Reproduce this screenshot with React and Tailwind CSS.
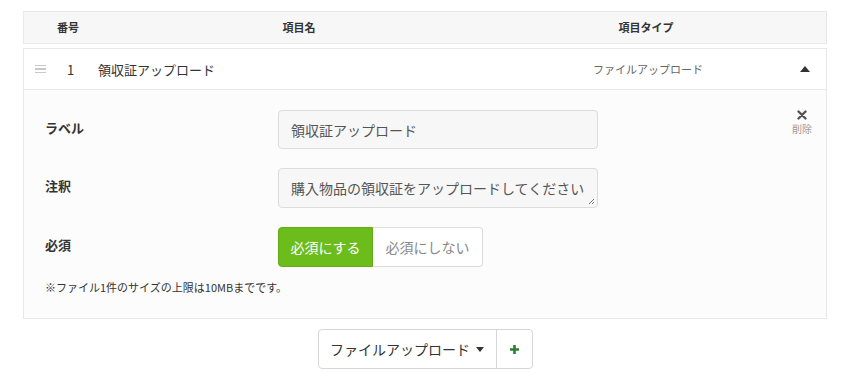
import React from 'react';

const font = { fontFamily: '"Noto Sans CJK JP", "Noto Sans", sans-serif' };

const App = () => {
  return (
    <div className="w-[850px] h-[388px] bg-white px-[23px] pt-[11px] text-[#333]" style={font}>
      {/* table header */}
      <div className="flex items-center h-[33px] border border-[#e8e8e8] bg-[#f7f7f7] text-[11px] font-bold leading-none text-[#333]">
        <div className="w-[88px] text-center">番号</div>
        <div className="w-[374px] text-center">項目名</div>
        <div className="flex-1 text-center pr-[100px] pl-[80px]">項目タイプ</div>
      </div>

      {/* item */}
      <div className="mt-[4px] border border-[#e8e8e8] bg-[#fcfcfc]">
        <div className="flex items-center h-[41px] bg-white border-b border-[#e8e8e8]">
          <div className="w-[12px] ml-[10px] flex flex-col gap-[2px] items-center">
            <span className="block w-[11px] h-[1.5px] bg-[#c8c8c8]" />
            <span className="block w-[11px] h-[1.5px] bg-[#c8c8c8]" />
            <span className="block w-[11px] h-[1.5px] bg-[#c8c8c8]" />
          </div>
          <div className="w-[52px] pl-[21px] text-[13px] leading-none">1</div>
          <div className="w-[495px] text-[13px] leading-none">領収証アップロード</div>
          <div className="w-[110px] text-[11px] leading-none text-[#666] whitespace-nowrap">ファイルアップロード</div>
          <div className="flex-1 flex justify-end pr-[16px]">
            <svg width="10" height="6" viewBox="0 0 10 6">
              <path d="M0 6 L5 0 L10 6 Z" fill="#333" />
            </svg>
          </div>
        </div>

        <div className="relative px-[21px] pt-[20px] pb-[20px]">
          <div className="absolute right-[14px] top-[20px] flex flex-col items-center">
            <svg width="10" height="10" viewBox="0 0 10 10">
              <path d="M1.5 1.5 L8.5 8.5 M8.5 1.5 L1.5 8.5" stroke="#555" strokeWidth="2.4" strokeLinecap="round" />
            </svg>
            <span className="mt-[4px] text-[10px] leading-none text-[#999]">削除</span>
          </div>

          <div className="flex items-center">
            <div className="w-[233px] pb-[5px] text-[13px] font-bold leading-none">ラベル</div>
            <div className="w-[320px] h-[39px] flex items-center px-[12px] bg-[#f7f7f7] border border-[#dcdcdc] rounded-[4px] text-[14px] text-[#555] leading-none">
              領収証アップロード
            </div>
          </div>

          <div className="flex items-center mt-[19px]">
            <div className="w-[233px] pb-[5px] text-[13px] font-bold leading-none">注釈</div>
            <div className="relative w-[320px] h-[40px] flex items-center px-[12px] bg-[#f7f7f7] border border-[#dcdcdc] rounded-[4px] text-[14px] text-[#555] leading-none whitespace-nowrap">
              購入物品の領収証をアップロードしてください
              <svg className="absolute right-[2px] bottom-[2px]" width="7" height="7" viewBox="0 0 7 7">
                <path d="M1 6 L6 1 M4 6 L6 4" stroke="#777" strokeWidth="1" />
              </svg>
            </div>
          </div>

          <div className="flex items-center mt-[19px]">
            <div className="w-[233px] pb-[5px] text-[13px] font-bold leading-none">必須</div>
            <div className="flex h-[40px]">
              <div className="w-[95px] flex items-center justify-center bg-[#6cbd1b] border border-[#62ad16] rounded-l-[4px] text-white text-[14px] leading-none">
                必須にする
              </div>
              <div className="w-[110px] flex items-center justify-center bg-white border border-l-0 border-[#dcdcdc] rounded-r-[4px] text-[#888] text-[14px] leading-none">
                必須にしない
              </div>
            </div>
          </div>

          <div className="mt-[15px] text-[11px] leading-none text-[#333]">
            ※ファイル1件のサイズの上限は10MBまでです。
          </div>
          <div className="h-[5px]" />
        </div>
      </div>

      {/* add button */}
      <div className="flex justify-center mt-[10px]">
        <div className="flex h-[40px] border border-[#d6d6d6] rounded-[4px] bg-white">
          <div className="w-[178px] flex items-center justify-center gap-[6px] text-[14px] leading-none text-[#333] border-r border-[#d6d6d6]">
            ファイルアップロード
            <svg width="8" height="5" viewBox="0 0 8 5">
              <path d="M0 0 L8 0 L4 5 Z" fill="#333" />
            </svg>
          </div>
          <div className="w-[35px] flex items-center justify-center">
            <svg width="11" height="11" viewBox="0 0 11 11">
              <path d="M5.5 1 V10 M1 5.5 H10" stroke="#2e7d32" strokeWidth="2.6" />
            </svg>
          </div>
        </div>
      </div>
    </div>
  );
};

export default App;
